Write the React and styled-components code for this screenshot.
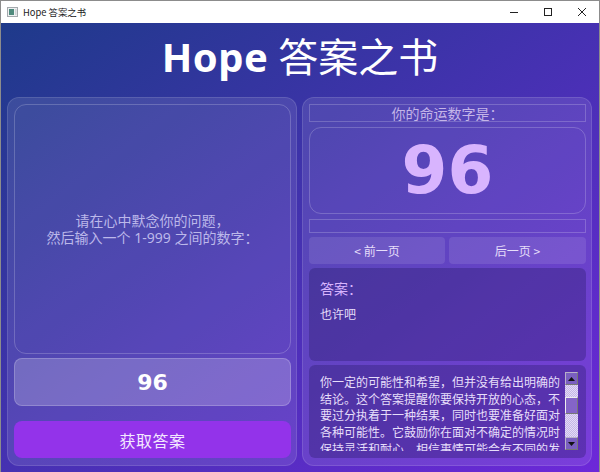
import styled, { createGlobalStyle } from 'styled-components';

const GlobalStyle = createGlobalStyle`
  html, body {
    margin: 0;
    padding: 0;
    width: 600px;
    height: 472px;
    overflow: hidden;
  }
  * {
    box-sizing: border-box;
  }
`;

const cjk = `"Noto Sans CJK SC", "DejaVu Sans", sans-serif`;
const mixed = `"Noto Sans", "Noto Sans CJK SC", sans-serif`;

const answerText =
  '你一定的可能性和希望，但并没有给出明确的结论。这个答案提醒你要保持开放的心态，不要过分执着于一种结果，同时也要准备好面对各种可能性。它鼓励你在面对不确定的情况时保持灵活和耐心，相信事情可能会有不同的发展。';

function AppIcon() {
  return (
    <svg width="11" height="10" viewBox="0 0 11 10">
      <rect x="0.5" y="0.5" width="10" height="9" fill="#eef0f1" stroke="#a4a9ad" />
      <rect x="2" y="2" width="5" height="6" fill="#4f8a7d" />
      <rect x="8" y="2" width="1.5" height="6" fill="#cfd4d8" />
    </svg>
  );
}

function App() {
  return (
    <>
      <GlobalStyle />
      <Window>
        <TitleBar>
          <TitleLeft>
            <AppIcon />
            <WindowName>Hope 答案之书</WindowName>
          </TitleLeft>
          <Controls>
            <ControlButton>
              <svg width="10" height="10" viewBox="0 0 10 10">
                <path d="M1 5.5h8" stroke="#222" fill="none" />
              </svg>
            </ControlButton>
            <ControlButton>
              <svg width="10" height="10" viewBox="0 0 10 10">
                <rect x="1.5" y="1.5" width="7" height="7" stroke="#222" fill="none" />
              </svg>
            </ControlButton>
            <ControlButton>
              <svg width="10" height="10" viewBox="0 0 10 10">
                <path d="M1 1l8 8M9 1l-8 8" stroke="#222" fill="none" />
              </svg>
            </ControlButton>
          </Controls>
        </TitleBar>
        <Content>
          <Heading>
            <HeadingLatin>Hope</HeadingLatin> 答案之书
          </Heading>
          <Columns>
            <Panel>
              <PromptBox>
                <div>
                  请在心中默念你的问题，
                  <br />
                  然后输入一个 1-999 之间的数字：
                </div>
              </PromptBox>
              <NumberInput>96</NumberInput>
              <SubmitButton>获取答案</SubmitButton>
            </Panel>
            <Panel>
              <FateLabel>你的命运数字是：</FateLabel>
              <FateBox>96</FateBox>
              <EmptyLabel />
              <PagerRow>
                <PagerButton>&lt; 前一页</PagerButton>
                <PagerButton>后一页 &gt;</PagerButton>
              </PagerRow>
              <AnswerCard>
                <AnswerTitle>答案：</AnswerTitle>
                <AnswerShort>也许吧</AnswerShort>
              </AnswerCard>
              <DetailCard>
                <DetailText>{answerText}</DetailText>
                <ScrollBar>
                  <ScrollArrow>
                    <svg width="7" height="4" viewBox="0 0 7 4">
                      <path d="M3.5 0L7 4H0z" fill="#111" />
                    </svg>
                  </ScrollArrow>
                  <ScrollTrack>
                    <ScrollThumb />
                  </ScrollTrack>
                  <ScrollArrow>
                    <svg width="7" height="4" viewBox="0 0 7 4">
                      <path d="M0 0h7L3.5 4z" fill="#111" />
                    </svg>
                  </ScrollArrow>
                </ScrollBar>
              </DetailCard>
            </Panel>
          </Columns>
        </Content>
      </Window>
    </>
  );
}
export default App;

const Window = styled.div`
  width: 600px;
  height: 472px;
  display: flex;
  flex-direction: column;
  border: 1px solid #8c8c8c;
  border-bottom: 0;
  overflow: hidden;
`;
const TitleBar = styled.div`
  height: 22px;
  flex: none;
  background: #fff;
  display: flex;
  justify-content: space-between;
  align-items: center;
`;
const TitleLeft = styled.div`
  display: flex;
  align-items: center;
  gap: 5px;
  padding-left: 6px;
`;
const WindowName = styled.div`
  font-family: ${cjk};
  font-size: 9.4px;
  color: #222;
`;
const Controls = styled.div`
  display: flex;
`;
const ControlButton = styled.div`
  width: 33px;
  height: 22px;
  display: flex;
  align-items: center;
  justify-content: center;
  margin-right: 1px;
`;
const Content = styled.div`
  flex: 1;
  background: linear-gradient(to bottom right, #1e3a8a 0%, #6d28d9 100%);
  display: flex;
  flex-direction: column;
  padding: 0 6px 6px;
`;
const Heading = styled.div`
  height: 74px;
  flex: none;
  text-align: center;
  font-family: ${cjk};
  font-size: 40px;
  line-height: 64px;
  color: #fff;
  font-weight: 400;
`;
const HeadingLatin = styled.span`
  font-family: "Noto Sans", sans-serif;
  font-weight: 700;
  letter-spacing: 0.5px;
  margin-right: 1px;
`;
const Columns = styled.div`
  flex: 1;
  display: grid;
  grid-template-columns: 290px 290px;
  gap: 5px;
  min-height: 0;
`;
const Panel = styled.div`
  background: rgba(255, 255, 255, 0.1);
  border: 1px solid rgba(255, 255, 255, 0.12);
  border-radius: 12px;
  padding: 6px 5px 6px 6px;
  display: flex;
  flex-direction: column;
  min-height: 0;
`;
const PromptBox = styled.div`
  height: 250px;
  flex: none;
  border: 1px solid rgba(255, 255, 255, 0.2);
  border-radius: 12px;
  display: flex;
  align-items: center;
  justify-content: center;
  text-align: center;
  font-family: ${mixed};
  font-size: 14px;
  line-height: 17px;
  color: #bcb8ea;
`;
const NumberInput = styled.div`
  height: 48px;
  flex: none;
  margin-top: 4px;
  background: rgba(255, 255, 255, 0.2);
  border: 1px solid rgba(255, 255, 255, 0.2);
  border-radius: 8px;
  display: flex;
  align-items: center;
  justify-content: center;
  font-family: "DejaVu Sans", sans-serif;
  font-weight: 700;
  font-size: 22px;
  color: #fff;
`;
const SubmitButton = styled.div`
  height: 37px;
  flex: none;
  margin-top: 15px;
  background: #9333ea;
  border-radius: 8px;
  display: flex;
  align-items: center;
  justify-content: center;
  font-family: ${cjk};
  font-size: 16px;
  letter-spacing: 0.5px;
  color: #f3e8ff;
`;
const FateLabel = styled.div`
  height: 18px;
  flex: none;
  border: 1px solid rgba(255, 255, 255, 0.2);
  text-align: center;
  font-family: ${cjk};
  font-size: 14px;
  line-height: 16px;
  color: #c4b5e8;
`;
const FateBox = styled.div`
  height: 87px;
  flex: none;
  margin-top: 5px;
  border: 1px solid rgba(255, 255, 255, 0.2);
  border-radius: 12px;
  display: flex;
  align-items: center;
  justify-content: center;
  font-family: "DejaVu Sans", sans-serif;
  font-weight: 700;
  font-size: 66px;
  color: #d8b4fe;
`;
const EmptyLabel = styled.div`
  height: 14px;
  flex: none;
  margin-top: 5px;
  border: 1px solid rgba(255, 255, 255, 0.2);
`;
const PagerRow = styled.div`
  display: grid;
  grid-template-columns: 136px 137px;
  gap: 4px;
  flex: none;
  margin-top: 4px;
`;
const PagerButton = styled.div`
  height: 27px;
  background: rgba(255, 255, 255, 0.1);
  border-radius: 4px;
  display: flex;
  align-items: center;
  justify-content: center;
  font-family: ${cjk};
  font-size: 12px;
  color: #e6defa;
`;
const AnswerCard = styled.div`
  height: 93px;
  flex: none;
  margin-top: 4px;
  background: rgba(30, 20, 90, 0.3);
  border-radius: 6px;
  padding: 10px 11px;
  font-family: ${cjk};
`;
const AnswerTitle = styled.div`
  font-size: 14px;
  line-height: 20px;
  color: #d8b4fe;
`;
const AnswerShort = styled.div`
  margin-top: 7px;
  font-size: 12px;
  line-height: 17px;
  color: #e6defa;
`;
const DetailCard = styled.div`
  height: 93px;
  flex: none;
  margin-top: 4px;
  background: rgba(30, 20, 90, 0.3);
  border-radius: 6px;
  padding: 7px 8px 8px 11px;
  display: flex;
  justify-content: space-between;
  overflow: hidden;
`;
const DetailText = styled.div`
  width: 241px;
  height: 79px;
  overflow: hidden;
  padding-top: 2px;
  font-family: ${cjk};
  font-size: 12px;
  line-height: 16.7px;
  color: #e6defa;
`;
const ScrollBar = styled.div`
  width: 13px;
  height: 78px;
  flex: none;
  display: flex;
  flex-direction: column;
`;
const ScrollArrow = styled.div`
  height: 13px;
  flex: none;
  background: #7a5fc0;
  border: 1px solid #b8b0c8;
  border-right-color: #777;
  border-bottom-color: #777;
  display: flex;
  align-items: center;
  justify-content: center;
`;
const ScrollTrack = styled.div`
  flex: 1;
  background: repeating-conic-gradient(#c4b5e8 0% 25%, #e4dcf4 0% 50%) 0 0 / 2px 2px;
  padding-top: 12px;
`;
const ScrollThumb = styled.div`
  height: 17px;
  background: #8464c8;
  border: 1px solid #eee;
  border-right-color: #777;
  border-bottom-color: #777;
`;
